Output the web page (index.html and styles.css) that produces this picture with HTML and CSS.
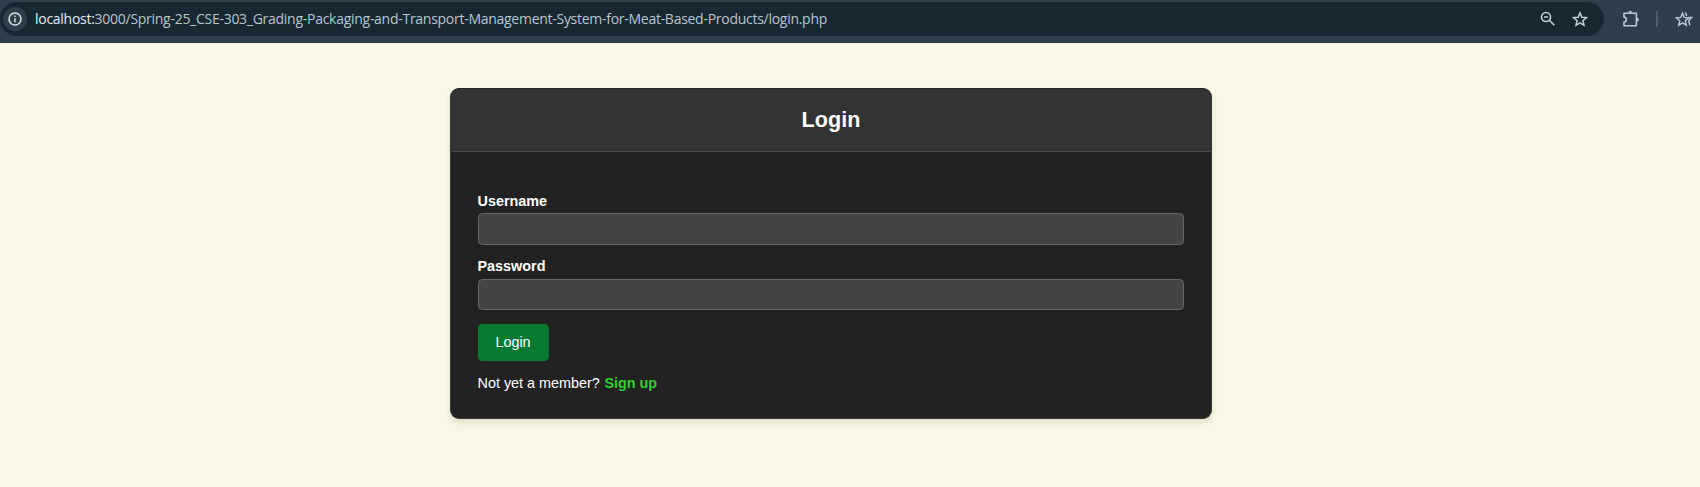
FILE: index.html
```html
<!DOCTYPE html>
<html lang="en">
<head>
<meta charset="utf-8">
<title>Login</title>
<link rel="stylesheet" href="styles.css">
</head>
<body>
<header class="toolbar">
  <div class="omnibox">
    <span class="site-info">
      <svg width="14" height="14" viewBox="0 0 14 14" fill="none" stroke="#d5e0e7" stroke-width="1.5"><circle cx="7" cy="7" r="6"/><path d="M7 6.2v4M7 3.6v1.5"/></svg>
    </span>
    <span class="url"><span class="host">localhost:</span>3000/Spring-25_CSE-303_Grading-Packaging-and-Transport-Management-System-for-Meat-Based-Products/login.php</span>
    <svg class="zoom" width="16" height="16" viewBox="0 0 16 16" fill="none" stroke="#c0cfd8" stroke-width="1.6"><circle cx="6" cy="6" r="4.5"/><path d="M9.3 9.3l5 5M4 6h4"/></svg>
    <svg class="star" width="16" height="16" viewBox="0 0 16 16" fill="none" stroke="#c0cfd8" stroke-width="1.5"><path d="M8 1.8l1.8 4.4 4.7.4-3.6 3.1 1.1 4.6L8 11.9l-4 2.4 1.1-4.6-3.6-3.1 4.7-.4z"/></svg>
  </div>
  <svg class="extensions" width="18" height="18" viewBox="0 0 18 18" fill="none" stroke="#b3c8d4" stroke-width="1.6" stroke-linejoin="round"><path d="M2 3.3h12.4v12.4H2v-3.6c3.2-.2 3.2-4.8 0-5z"/><path fill="#b3c8d4" stroke="none" d="M6.2 2.8a2 2 0 0 1 4 0zM14.8 7.5a2 2 0 0 1 0 4z"/></svg>
  <span class="divider"></span>
  <svg class="favorites" width="18" height="17" viewBox="0 0 18 17" fill="none" stroke="#b3c8d4" stroke-width="1.5"><path d="M7.5 2.2l1.7 4.2 4.5.4-3.4 3 1 4.4-3.8-2.3-3.8 2.3 1-4.4-3.4-3 4.5-.4zM10.4 1.6l1.4 3.4M13.8 6.6h2.7l-2.8 3.1 1.1 4.5"/></svg>
</header>
<main class="page">
  <section class="card">
    <h1 class="card-header">Login</h1>
    <form class="card-body">
      <label class="label" for="username">Username</label>
      <input class="field" id="username" type="text">
      <label class="label label-password" for="password">Password</label>
      <input class="field field-password" id="password" type="password">
      <button class="submit" type="button">Login</button>
      <p class="signup">Not yet a member? <a class="signup-link" href="#">Sign up</a></p>
    </form>
  </section>
</main>
</body>
</html>
```
FILE: styles.css
```css
* { box-sizing: border-box; }
body {
  margin: 0;
  height: 487px;
  overflow: hidden;
  background: #f9f8e4;
  font-family: "Liberation Sans", Arial, sans-serif;
}
.toolbar {
  display: flex;
  align-items: center;
  height: 43px;
  padding-bottom: 5px;
  background: #2e3e4a;
}
.omnibox {
  display: flex;
  align-items: center;
  width: 1604px;
  height: 34px;
  padding-left: 3px;
  border-radius: 17px;
  background: #172833;
}
.site-info {
  display: flex;
  align-items: center;
  justify-content: center;
  width: 24px;
  height: 24px;
  border-radius: 50%;
  background: #2e3e4a;
}
.url {
  flex: 1;
  margin-left: 8px;
  white-space: nowrap;
  font: 14px/20px "Open Sans", "Noto Sans", sans-serif;
  letter-spacing: -0.274px;
  color: #bac5cc;
}
.host { color: #e4edf1; }
.star { margin: 0 16px; }
.extensions { margin-left: 18px; }
.divider {
  width: 2px;
  height: 16px;
  margin: 0 17px 0 16px;
  background: #4b5f6c;
}
.page {
  display: flex;
  padding: 45px 0 0 450px;
}
.card {
  width: 762px;
  height: 331px;
  border: 1px solid #393937;
  border-top-color: #222;
  border-radius: 9px;
  background: #222;
  color: #fff;
  overflow: hidden;
  box-shadow: 0 4px 7px rgba(0, 0, 0, 0.1);
}
.card-header {
  height: 63px;
  margin: 0;
  border-bottom: 1px solid #484848;
  background: #333;
  font-size: 21.6px;
  line-height: 61px;
  text-align: center;
}
.card-body {
  display: flex;
  flex-direction: column;
  align-items: flex-start;
  padding: 41px 27px 0 26.5px;
  font-size: 14.4px;
}
.label {
  font-weight: bold;
  line-height: 16px;
  margin-bottom: 4px;
}
.label-password { margin: -1px 0 5px; }
.field {
  width: 100%;
  height: 32px;
  margin: 0 0 14px;
  border: 1px solid #666;
  border-radius: 4.5px;
  background: #444;
}
.field-password { height: 31px; }
.submit {
  width: 71px;
  height: 37px;
  padding: 0 0 2px;
  border: 0;
  border-radius: 4.5px;
  background: #087a32;
  color: #fff;
  font: 14.4px "Liberation Sans", Arial, sans-serif;
}
.signup {
  margin: 14px 0 0;
  line-height: 16px;
}
.signup-link {
  margin-left: 0.5px;
  color: #32cd32;
  font-weight: bold;
  text-decoration: none;
}
```
